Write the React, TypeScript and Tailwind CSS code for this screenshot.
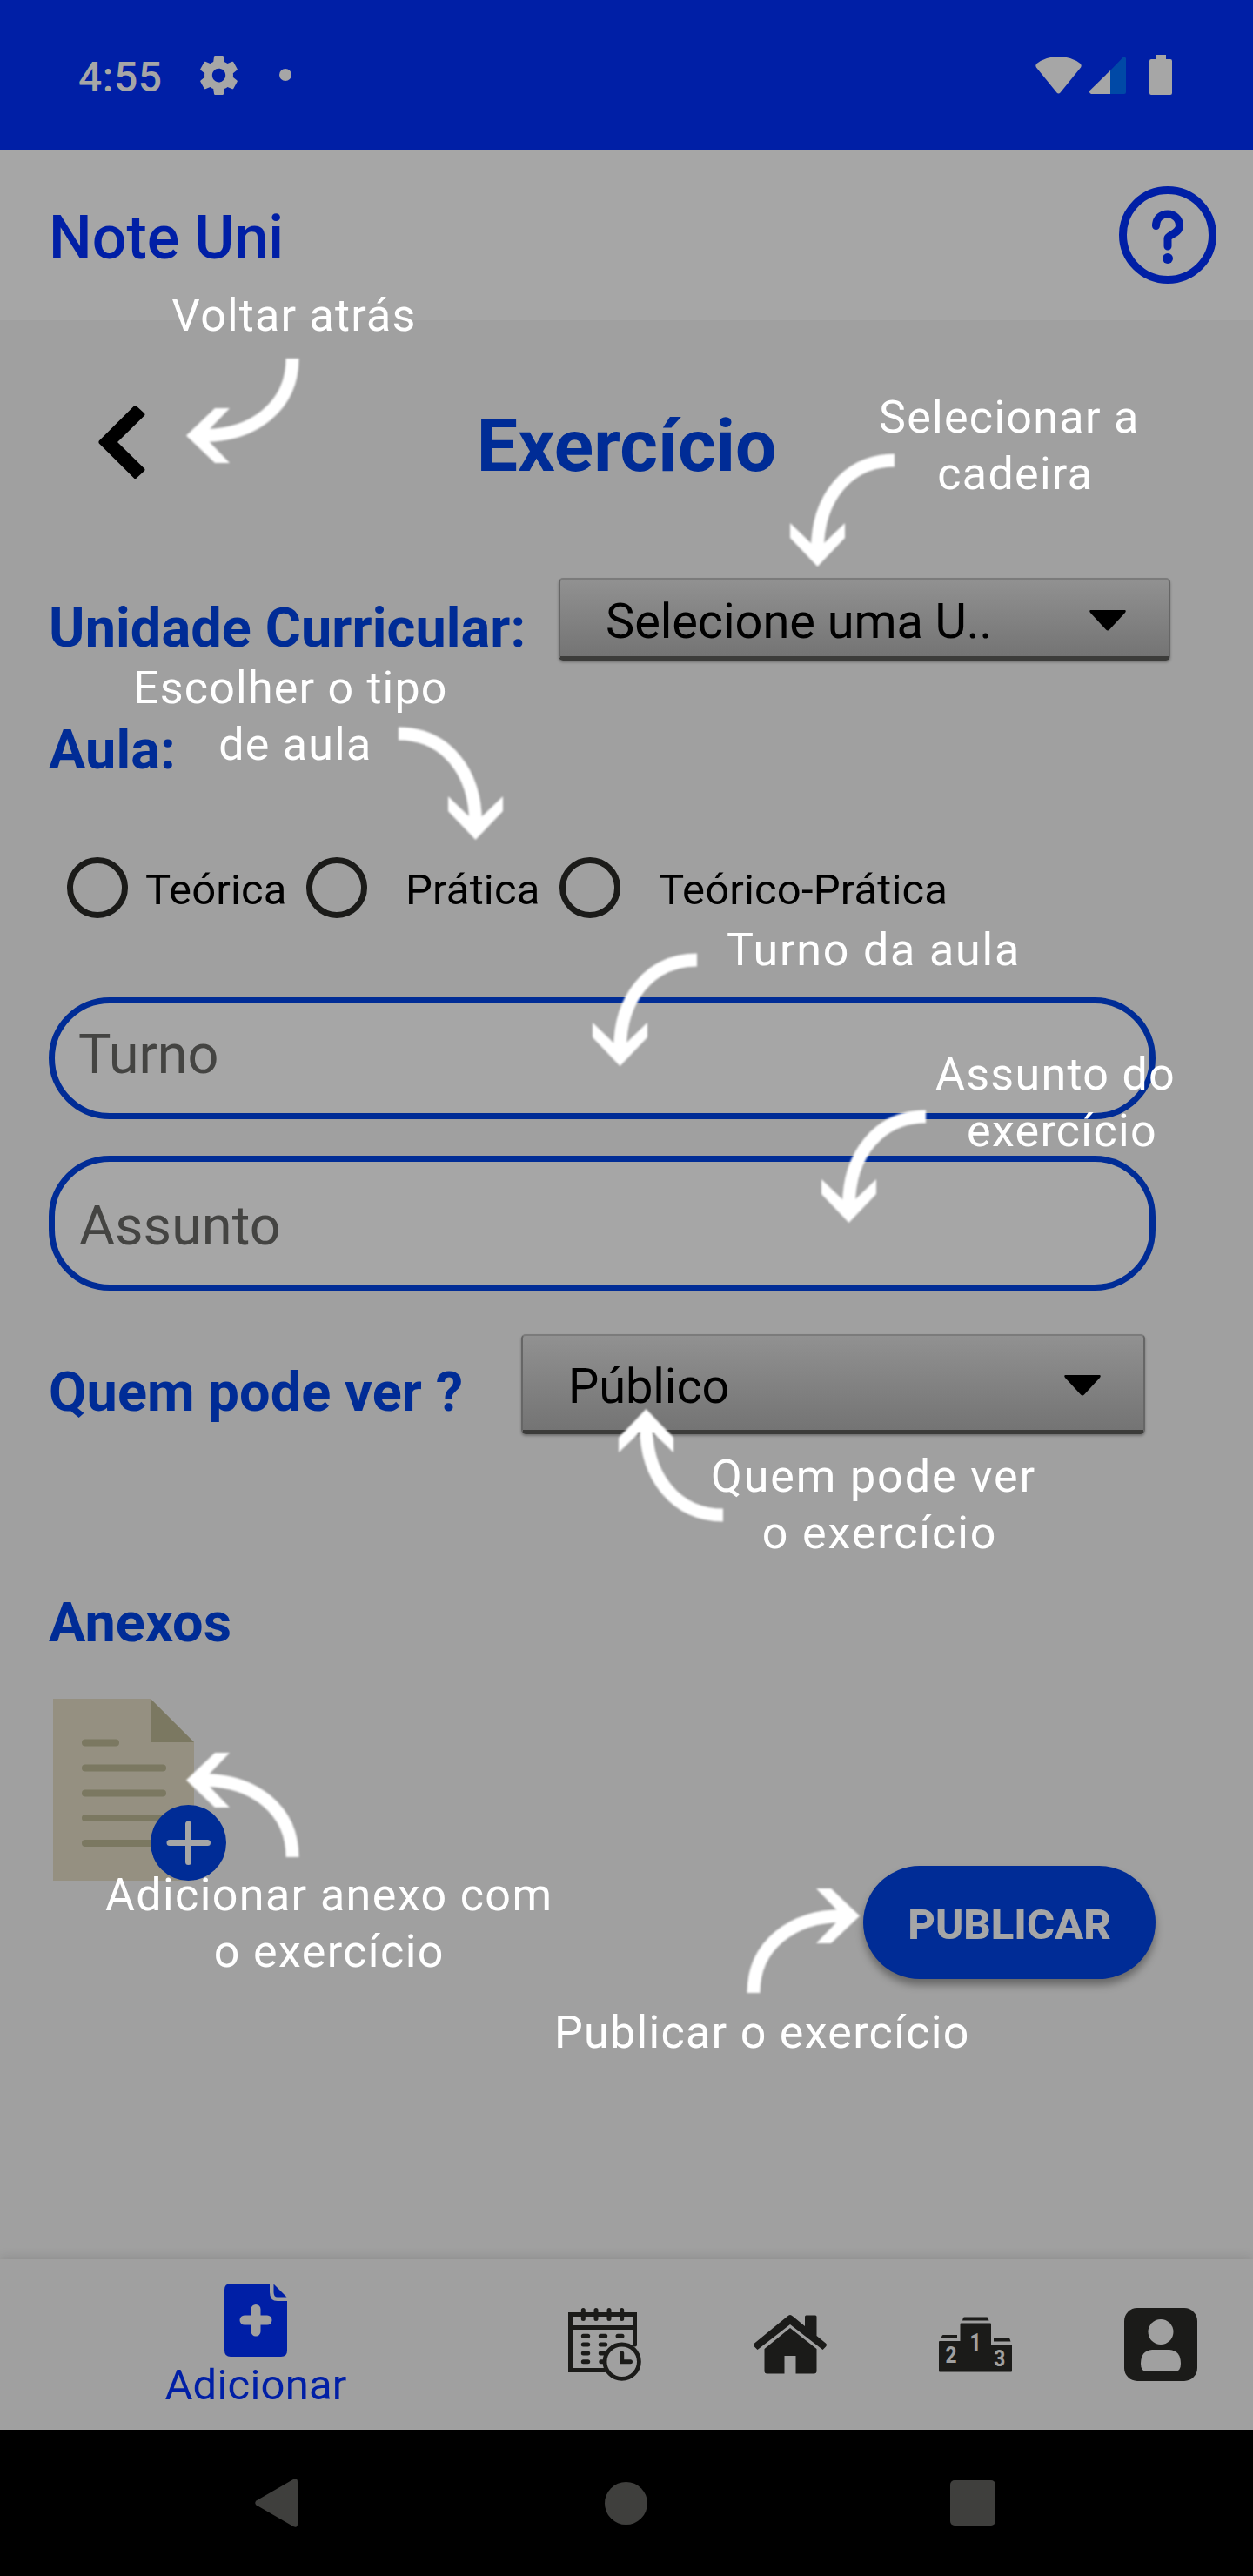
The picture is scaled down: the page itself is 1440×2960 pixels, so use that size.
import type { ReactNode } from "react";

function StatusBar() {
  return (
    <div className="flex h-[172px] items-center bg-[#001fa6] pl-[90px] pr-[93px] text-[#a6a6a6]">
      <span className="w-[140px] pt-[5px] text-[48px] font-medium leading-[56px] tracking-[0.5px]">4:55</span>
      <svg className="h-[45px] w-[43px]" viewBox="2.2 2 19.6 20" preserveAspectRatio="none" fill="currentColor">
        <path d="M19.43 12.98c.04-.32.07-.64.07-.98s-.03-.66-.07-.98l2.11-1.65c.19-.15.24-.42.12-.64l-2-3.46c-.12-.22-.39-.3-.61-.22l-2.49 1c-.52-.4-1.08-.73-1.69-.98l-.38-2.65C14.46 2.18 14.25 2 14 2h-4c-.25 0-.46.18-.49.42l-.38 2.65c-.61.25-1.17.59-1.69.98l-2.49-1c-.23-.09-.49 0-.61.22l-2 3.46c-.13.22-.07.49.12.64l2.11 1.65c-.04.32-.07.65-.07.98s.03.66.07.98l-2.11 1.65c-.19.15-.24.42-.12.64l2 3.46c.12.22.39.3.61.22l2.49-1c.52.4 1.08.73 1.69.98l.38 2.65c.03.24.24.42.49.42h4c.25 0 .46-.18.49-.42l.38-2.65c.61-.25 1.17-.59 1.69-.98l2.49 1c.23.09.49 0 .61-.22l2-3.46c.12-.22.07-.49-.12-.64l-2.11-1.65zM12 15.5c-1.93 0-3.5-1.57-3.5-3.5s1.57-3.5 3.5-3.5 3.5 1.57 3.5 3.5-1.57 3.5-3.5 3.5z" />
      </svg>
      <span className="ml-[48px] h-[14px] w-[14px] rounded-full bg-[#a6a6a6]" />
      <svg className="ml-auto h-[43px] w-[53px]" viewBox="0 0 53 43" fill="currentColor">
        <path d="M1 12.5Q-0.5 10 1.5 8Q12 0 26.5 0Q41 0 51.500 8Q53.500 10 52 12.500L28.500 41.500Q26.500 43.500 24.500 41.500Z" />
      </svg>
      <svg className="ml-[9px] h-[43px] w-[42px]" viewBox="0 0 42 43">
        <path d="M24 16V43H2Q-1 42 0.500 39Z" fill="#a6a6a6" />
        <path d="M24 16L38.500 1Q41 -0.500 42 2V41Q42 43 40 43H24Z" fill="#0049a6" />
      </svg>
      <svg className="ml-[27px] h-[46px] w-[26px]" viewBox="0 0 26 46" fill="currentColor">
        <path d="M7 0H19V5H24Q26 5 26 7V44Q26 46 24 46H2Q0 46 0 44V7Q0 5 2 5H7Z" />
      </svg>
    </div>
  );
}

function Header() {
  return (
    <header className="flex h-[196px] items-center justify-between bg-[#a6a6a6] pl-[56px] pr-[42px] text-[#001fa6]">
      <h1 className="pt-[6px] text-[70px] font-medium leading-[80px]">Note Uni</h1>
      <svg className="h-[112px] w-[112px]" viewBox="0 0 112 112" fill="none" stroke="currentColor">
        <circle cx="56" cy="56" r="51.500" strokeWidth="9" />
        <path d="M42.500 45.500C42.500 37 48.500 32 56 32C63.500 32 69.500 37.500 69.500 45C69.500 55 56 55.500 56 60V69" strokeWidth="9" strokeLinecap="round" />
        <circle cx="56" cy="83" r="6" fill="currentColor" stroke="none" />
      </svg>
    </header>
  );
}

function Spinner({ text, className }: { text: string; className: string }) {
  return (
    <div
      className={`flex items-center justify-between rounded-[5px] border-2 border-b-[5px] border-x-[#666] border-t-[#7b7b7b] border-b-[#3c3c3a] bg-linear-to-b from-[#919191] to-[#747474] pl-[52px] text-black shadow-[0_2px_3px_rgba(0,0,0,0.3)] ${className}`}
    >
      <span className="pt-[8px] text-[56px] leading-[66px] tracking-[-0.1px]">{text}</span>
      <svg className="mt-[5px] h-[24px] w-[42px]" viewBox="0 0 42 24" fill="#000">
        <path d="M1 0H41Q42.500 1 41 3L23 22.500Q21 24.500 19 22.500L1 3Q-0.500 1 1 0Z" />
      </svg>
    </div>
  );
}

function Radio({ label, className }: { label: string; className: string }) {
  return (
    <label className={`flex items-center text-black ${className}`}>
      <span className="h-[70px] w-[70px] shrink-0 rounded-full border-[7px] border-[#1b1b19]" />
      <span className="whitespace-nowrap pt-[5px] text-[49px] leading-[57px] tracking-[0.15px]">{label}</span>
    </label>
  );
}

function DocumentIcon() {
  return (
    <svg className="h-[209px] w-[199px]" viewBox="0 0 199 209">
      <path d="M0 0H112L162 50V209H0Z" fill="#959081" />
      <path d="M112 0L162 50H112Z" fill="#7b7861" />
      <path d="M37 50.500H72M37 79.500H126M37 108.500H126M37 137H126M37 166H126" stroke="#7b7861" strokeWidth="8" strokeLinecap="round" />
      <circle cx="155.500" cy="165.500" r="43.500" fill="#002c96" />
      <path d="M134 165.500H177.500M155.500 144V187.500" stroke="#a6a6a6" strokeWidth="7" strokeLinecap="round" />
    </svg>
  );
}

const fieldClass = "ml-[56px] flex w-[1272px] items-center rounded-[70px] border-[7px] border-[#002c96] bg-[#a6a6a6] text-[63px] leading-[74px] text-[#444442]";
const labelClass = "text-[63px] font-bold leading-[72px] tracking-[0.1px] text-[#002c96]";

function ExerciseForm() {
  return (
    <main className="flex h-[2228px] flex-col bg-[#a0a0a0]">
      <div className="mt-[84px] grid h-[112px] grid-cols-3 items-center">
        <svg className="ml-[113px] h-[84px] w-[54px]" viewBox="0 0 54 84" fill="#000">
          <path d="M41.500 0Q43 -0.500 44 0.800L53 9Q54 10.500 53 11.500L22 42L53 72.500Q54 73.500 53 75L44 83.200Q43 84.500 41.500 84L0.800 43.500Q0 42 0.800 40.500Z" />
        </svg>
        <h2 className="pt-[9px] text-center text-[84px] font-bold leading-[98px] text-[#002c96]">Exercício</h2>
      </div>

      <div className="mt-[100px] flex h-[95px] items-center pl-[56px]">
        <span className={`w-[586px] whitespace-nowrap pt-[20px] ${labelClass}`}>Unidade Curricular:</span>
        <Spinner text="Selecione uma U.." className="h-[95px] w-[703px] pr-[49px]" />
      </div>

      <span className={`ml-[56px] mt-[67px] ${labelClass}`}>Aula:</span>

      <div className="mt-[87px] flex h-[70px] items-center pl-[77px]">
        <Radio label="Teórica" className="w-[275px] gap-[20px]" />
        <Radio label="Prática" className="w-[291px] gap-[44px]" />
        <Radio label="Teórico-Prática" className="gap-[44px]" />
      </div>

      <div className={`mt-[91px] h-[140px] pb-[9px] pl-[27px] ${fieldClass}`}>Turno</div>
      <div className={`mt-[42px] h-[155px] pl-[28px] pt-[6px] ${fieldClass}`}>Assunto</div>

      <div className="mt-[50px] flex h-[115px] items-center pl-[56px]">
        <span className={`w-[543px] whitespace-nowrap pt-[18px] ${labelClass}`}>Quem pode ver ?</span>
        <Spinner text="Público" className="h-[115px] w-[717px] pr-[49px]" />
      </div>

      <span className={`ml-[56px] mt-[181px] ${labelClass}`}>Anexos</span>

      <div className="mt-[51px] flex items-start justify-between pl-[61px] pr-[112px]">
        <DocumentIcon />
        <button className="mt-[192px] h-[130px] w-[336px] rounded-full bg-[#002c96] pt-[4px] text-[49px] font-extrabold leading-[57px] text-[#a6a6a6] shadow-[0_7px_10px_rgba(0,0,0,0.35)]">
          PUBLICAR
        </button>
      </div>
    </main>
  );
}

function TabBar() {
  return (
    <nav className="flex h-[196px] bg-[#a0a0a0] text-[#1b1b19] shadow-[0_-2px_12px_rgba(0,0,0,0.12)]">
      <div className="flex w-[588px] flex-col items-center pt-[28px] text-[#001fa6]">
        <svg className="h-[84px] w-[72px]" viewBox="0 0 72 84">
          <path d="M7 0H52V10Q52 20 61 20H72V77Q72 84 65 84H7Q0 84 0 77V7Q0 0 7 0Z" fill="currentColor" />
          <path d="M56.500 0.500L71.500 15.500H61Q56.500 15.500 56.500 10Z" fill="currentColor" />
          <path d="M36 29.500V55M23 42H49" stroke="#a0a0a0" strokeWidth="11" strokeLinecap="round" />
        </svg>
        <span className="mt-[5px] text-[49px] leading-[56px] tracking-[0.2px]">Adicionar</span>
      </div>
      <div className="flex flex-1 items-center justify-center">
        <svg className="h-[84px] w-[84px]" viewBox="0 0 84 84" fill="none" stroke="currentColor" strokeLinecap="round">
          <path d="M42 71.500H2.500V7.500H76.500V42M2.500 22.500H76.500" strokeWidth="5" />
          <path d="M17.300 2.500V12.500M32 2.500V12.500M47 2.500V12.500M61.700 2.500V12.500" strokeWidth="5" />
          <path d="M17.300 32.300H22.700M37.300 32.300H42.700M57 32.300H62M17.300 42H22.700M37.300 42H42.700M17.300 52H22.700M37.300 52H41M17.300 61.700H22.700M37.800 61.700H39.500" strokeWidth="5" />
          <circle cx="61.700" cy="61.700" r="19.700" strokeWidth="4.800" />
          <path d="M61.700 52V61.700H71.500" strokeWidth="5" />
        </svg>
      </div>
      <div className="flex flex-1 items-center justify-center">
        <svg className="h-[84px] w-[84px]" viewBox="0 0 84 84" fill="currentColor">
          <path d="M39 9.500Q42 6.500 45 9.500L59 21V10Q59 8.500 60.500 8.500H71Q72.500 8.500 72.500 10V32L83.500 41Q84.500 43 83 44.500L79.500 48L42 19L4.500 48L1 44.500Q-0.500 43 0.500 41Z" />
          <path d="M42 23L72.500 47V72.500Q72.500 75.500 69.500 75.500H48.500V55H35.500V75.500H15.500Q12.500 75.500 12.500 72.500V47Z" />
        </svg>
      </div>
      <div className="flex flex-1 items-center justify-center">
        <svg className="h-[84px] w-[84px]" viewBox="0 -10 84 84" fill="currentColor">
          <path d="M1 28H24.500V8.500Q24.500 7.500 25.500 7.500H59Q60 7.500 60 8.500V32H83Q84 32 84 33V62Q84 63.500 83 63.500H1Q0 63.500 0 62V29Q0 28 1 28ZM28 1Q28.500 0.500 29.500 0.500H55Q56 0.500 56.500 1.500L57.500 4.500H27ZM5 21H21V25H2.500L3.500 22Q4 21 5 21ZM63 24.500H79.500Q81 24.500 81.500 25.500L82.500 28.500H63Z" />
          <g fill="#a0a0a0" textAnchor="middle" className="font-extrabold">
            <text x="14" y="53" fontSize="25" textLength="13" lengthAdjust="spacingAndGlyphs">2</text>
            <text x="42" y="39.500" fontSize="30" textLength="13" lengthAdjust="spacingAndGlyphs">1</text>
            <text x="69.800" y="56.500" fontSize="25" textLength="13" lengthAdjust="spacingAndGlyphs">3</text>
          </g>
        </svg>
      </div>
      <div className="flex flex-1 items-center justify-center">
        <svg className="h-[84px] w-[84px]" viewBox="0 0 84 84">
          <rect width="84" height="84" rx="15" fill="currentColor" />
          <circle cx="42" cy="27.500" r="14.500" fill="#a0a0a0" />
          <path d="M32 48H52Q65 49 65 64Q65 73 58 73H26Q19 73 19 64Q19 49 32 48Z" fill="#a0a0a0" />
        </svg>
      </div>
    </nav>
  );
}

function SystemNav() {
  return (
    <div className="flex h-[168px] items-center bg-black">
      <svg className="ml-[293px] h-[56px] w-[49px]" viewBox="0 0 49 56" fill="#3f3f3d">
        <path d="M1.500 25.500L44 1Q49 -1.500 49 4V52Q49 57.500 44 55L1.500 30.500Q-1 28 1.500 25.500Z" />
      </svg>
      <span className="ml-[353px] h-[49px] w-[49px] rounded-full bg-[#3f3f3d]" />
      <span className="ml-[348px] h-[52px] w-[52px] rounded-[5px] bg-[#3f3f3d]" />
    </div>
  );
}

function Arrow({ className, width, height, transform }: { className: string; width: number; height: number; transform?: string }) {
  return (
    <svg className={`absolute overflow-visible blur-[1px] ${className}`} width={width} height={height} viewBox={`0 0 ${width} ${height}`}>
      <g transform={transform}>
        <path d="M120 8C66 8 31 52 31.500 112" fill="none" stroke="#fff" strokeWidth="15" />
        <path d="M0 80L25 104L38 104L63 80V97L31.500 130L0 97Z" fill="#fff" />
      </g>
    </svg>
  );
}

function Hint({ className, children }: { className: string; children: ReactNode }) {
  return (
    <p className={`absolute whitespace-nowrap text-center text-[52px] leading-[65px] text-white ${className}`}>{children}</p>
  );
}

function TutorialOverlay() {
  return (
    <div className="absolute inset-0 overflow-hidden">
      <Hint className="left-[197px] top-[330px] tracking-[1.2px]">Voltar atrás</Hint>
      <Arrow className="left-[214px] top-[412px]" width={130} height={120} transform="matrix(0 -1 -1 0 130 120)" />

      <Hint className="left-[1010px] top-[447px] tracking-[1.3px]">Selecionar a<span className="block pl-[14px]">cadeira</span></Hint>
      <Arrow className="left-[908px] top-[521px]" width={120} height={130} />

      <Hint className="left-[153px] top-[758px] tracking-[1.2px]">Escolher o tipo<span className="block pl-[11px]">de aula</span></Hint>
      <Arrow className="left-[458px] top-[835px]" width={120} height={130} transform="matrix(-1 0 0 1 120 0)" />

      <Hint className="left-[835px] top-[1059px] tracking-[1.8px]">Turno da aula</Hint>
      <Arrow className="left-[681px] top-[1095px]" width={120} height={130} />

      <Hint className="left-[1075px] top-[1202px] tracking-[1.3px]">Assunto do<span className="block pl-[15px]">exercício</span></Hint>
      <Arrow className="left-[944px] top-[1275px]" width={120} height={130} />

      <Hint className="left-[817px] top-[1664px] tracking-[1.9px]">Quem pode ver<span className="block pl-[14px]">o exercício</span></Hint>
      <Arrow className="left-[711px] top-[1619px]" width={120} height={130} transform="matrix(1 0 0 -1 0 130)" />

      <Hint className="left-[121px] top-[2145px] tracking-[1.4px]">Adicionar anexo com<span className="block">o exercício</span></Hint>
      <Arrow className="left-[214px] top-[2014px]" width={130} height={120} transform="matrix(0 1 -1 0 130 0)" />

      <Hint className="left-[637px] top-[2303px] tracking-[1.3px]">Publicar o exercício</Hint>
      <Arrow className="left-[858px] top-[2170px]" width={130} height={120} transform="matrix(0 1 1 0 0 0)" />
    </div>
  );
}

export default function App() {
  return (
    <div className="relative h-[2960px] w-[1440px] overflow-hidden bg-black font-['Roboto',sans-serif]">
      <StatusBar />
      <Header />
      <ExerciseForm />
      <TabBar />
      <SystemNav />
      <TutorialOverlay />
    </div>
  );
}
